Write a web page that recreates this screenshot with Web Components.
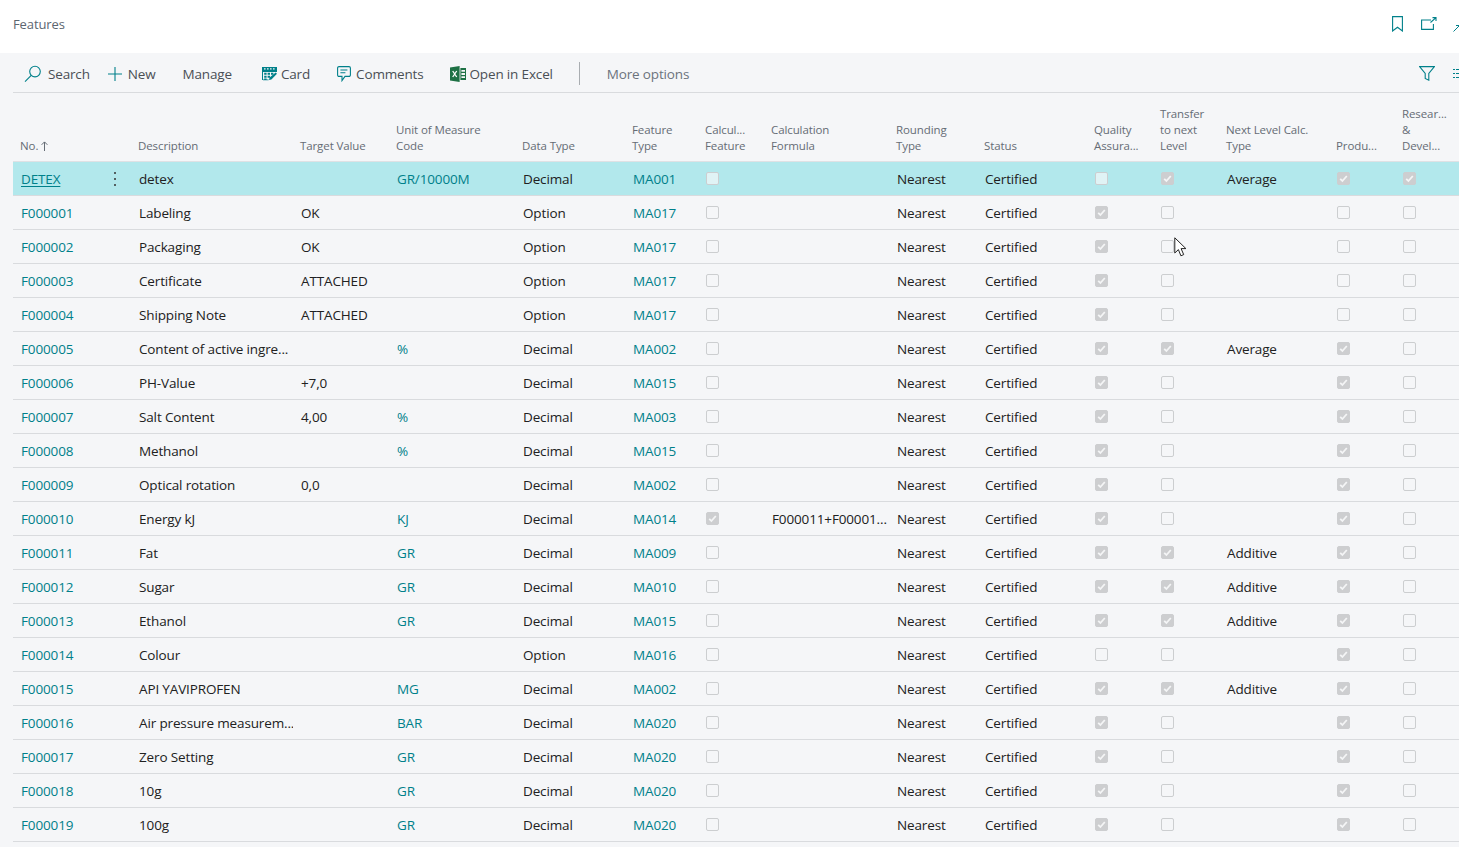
<!DOCTYPE html>
<html>
<head>
<meta charset="utf-8">
<title>Features</title>
<style>
  html, body { margin: 0; height: 100%; overflow: hidden; background: #f5f6f8; }
  body {
    font-family: "Open Sans", "Noto Sans", sans-serif;
    color: #212121;
    --cols: 118px 162px 96px 126px 110px 73px 66px 125px 88px 110px 66px 66px 110px 66px 64px;
    --teal: #00808a;
    position: relative;
  }
  #cursor { position: absolute; left: 1174px; top: 237px; }
</style>
</head>
<body>
<bc-title-bar>Features</bc-title-bar>
<bc-toolbar>
  <bc-action gap="6" style="margin-left:11px">
    <svg slot="icon" width="18" height="18" viewBox="0 0 18 18" fill="none" stroke="#00808a" stroke-width="1.1"><circle cx="11" cy="6.6" r="5.3"/><path d="M7.2 10.4 1 16.6"/></svg>Search
  </bc-action>
  <bc-action gap="6" style="margin-left:18px">
    <svg slot="icon" width="14" height="14" viewBox="0 0 14 14" fill="none" stroke="#00808a" stroke-width="1.1"><path d="M7 0v14M0 7h14"/></svg>New
  </bc-action>
  <bc-action gap="0" style="margin-left:27px">Manage</bc-action>
  <bc-action gap="4" style="margin-left:30px">
    <svg slot="icon" width="15" height="15" viewBox="0 0 15 15"><path fill="#00808a" d="M0 1h15v5H0z"/><path fill="#f5f6f8" d="M2 2.2h1.6v1.2H2zM5 2.2h1.6v1.2H5zM8 2.2h1.6v1.2H8zM11 2.2h1.6v1.2H11z"/><path fill="#00808a" d="M0 6h1v8H0zM2.2 6.8h2.4v2H2.2zM5.6 6.8H8v2H5.6zM9 6.8h2.4v2H9zM2.2 9.8h2.4v2H2.2zM5.6 9.8H8v2H5.6zM2.2 12.4h2.4v1.6H2.2zM1 13.4h5.6v.8H1z"/><path fill="#00808a" d="M13.6 6.4 15 7.8 9.4 13.4 7 14l.6-2.4z"/></svg>Card
  </bc-action>
  <bc-action gap="5" style="margin-left:27px">
    <svg slot="icon" width="14" height="16" viewBox="0 0 14 16" fill="none" stroke="#00808a" stroke-width="1.1"><path d="M2 .6h10A1.4 1.4 0 0 1 13.4 2v7A1.4 1.4 0 0 1 12 10.4H8L5 14.6v-4.2H2A1.4 1.4 0 0 1 .6 9V2A1.4 1.4 0 0 1 2 .6Z"/><path d="M3.4 4h7M3.4 6.8h5"/></svg>Comments
  </bc-action>
  <bc-action gap="4" style="margin-left:26px">
    <svg slot="icon" width="16" height="16" viewBox="0 0 16 16"><path fill="#1e7145" d="M0 1.6 9.6 0v16L0 14.4z"/><path fill="#1e7145" d="M10.4 2H16v12h-5.600z"/><path fill="#f5f6f8" d="M11.400 4h3.600v1.800h-3.600zM11.400 7.100h3.600v1.800h-3.600zM11.400 10.200h3.600v1.800h-3.600z"/><path fill="none" stroke="#fff" stroke-width="1.300" d="M2.700 5 6.700 11M6.700 5 2.700 11"/></svg>Open in Excel
  </bc-action>
  <bc-separator></bc-separator>
  <bc-action gap="0" muted style="margin-left:27px">More options</bc-action>
  <bc-tool-icons></bc-tool-icons>
</bc-toolbar>
<bc-grid></bc-grid>
<svg id="cursor" width="13" height="21" viewBox="0 0 13 21"><path fill="#fff" stroke="#222" stroke-width="1" stroke-linejoin="round" d="M.8.8v15.200l3.600-3.400 2.500 6.200 2.800-1.200-2.600-6h4.800z"/></svg>

<script>
class BcTitleBar extends HTMLElement {
  connectedCallback() {
    this.attachShadow({ mode: 'open' });
    this.shadowRoot.innerHTML = `
      <style>
        :host { display: flex; align-items: center; height: 53px; background: #fff; padding: 0 0 5px 13px; box-sizing: border-box; overflow: hidden; position: relative; }
        .name { font-size: 13px; color: #5c6670; letter-spacing: -0.1px; }
        .icons { position: absolute; left: 1392px; top: 16px; display: flex; align-items: flex-start; }
        svg { display: block; flex: none; }
      </style>
      <span class="name"><slot></slot></span>
      <div class="icons">
        <svg width="11" height="16" viewBox="0 0 11 16" fill="none" stroke="#00808a" stroke-width="1.1"><path d="M.6.6h9.800v14.400L5.500 11.200.6 15Z"/></svg>
        <svg style="margin:1px 0 0 18px" width="16" height="13" viewBox="0 0 16 13" fill="none" stroke="#00808a" stroke-width="1.1"><path d="M10 3H.6v9.400h11.800V7"/><path d="M9.500 5.500 15 .6M11.500.6H15v3.400"/></svg>
        <svg style="margin:7px 0 0 16px" width="8" height="9" viewBox="0 0 8 9" fill="none" stroke="#00808a" stroke-width="1"><path d="M.5 8.500 6.500 2.500M3 2.500h3.500V6"/></svg>
      </div>`;
  }
}

class BcToolbar extends HTMLElement {
  connectedCallback() {
    this.attachShadow({ mode: 'open' });
    this.shadowRoot.innerHTML = `
      <style>
        :host { display: flex; align-items: center; height: 40px; margin-left: 13px; padding-top: 2px; border-bottom: 1px solid #d9dbde; box-sizing: border-box; position: relative; }
      </style>
      <slot></slot>`;
  }
}

class BcAction extends HTMLElement {
  connectedCallback() {
    const gap = this.getAttribute('gap') || 0;
    const color = this.hasAttribute('muted') ? '#6b737c' : '#4a4f55';
    this.attachShadow({ mode: 'open' });
    this.shadowRoot.innerHTML = `
      <style>
        :host { display: inline-flex; align-items: center; gap: ${gap}px; font-size: 13.5px; letter-spacing: -0.16px; color: ${color}; white-space: nowrap; flex: none; }
        ::slotted(svg) { display: block; flex: none; }
      </style>
      <slot name="icon"></slot><span><slot></slot></span>`;
  }
}

class BcSeparator extends HTMLElement {
  connectedCallback() {
    this.attachShadow({ mode: 'open' });
    this.shadowRoot.innerHTML = `
      <style>
        :host { display: block; width: 1px; height: 23px; background: #a9adb1; margin-left: 26px; flex: none; }
      </style>`;
  }
}

class BcToolIcons extends HTMLElement {
  connectedCallback() {
    this.attachShadow({ mode: 'open' });
    this.shadowRoot.innerHTML = `
      <style>
        :host { position: absolute; left: 1406px; top: 13px; display: flex; align-items: center; }
        svg { display: block; flex: none; }
      </style>
      <svg width="16" height="15" viewBox="0 0 16 15" fill="none" stroke="#00808a" stroke-width="1.1"><path d="M.6.6h14.800L9.800 7.400v6.800L6.200 12.400V7.400Z"/></svg>
      <svg style="margin-left:18px" width="8" height="11" viewBox="0 0 8 11" fill="none" stroke="#00808a" stroke-width="1"><path d="M0 1.500h2M3 1.500h5M0 5.500h2M3 5.500h5M0 9.500h2M3 9.500h5"/></svg>`;
  }
}

class BcCheck extends HTMLElement {
  connectedCallback() {
    const on = this.hasAttribute('checked');
    const tint = this.hasAttribute('tint');
    this.attachShadow({ mode: 'open' });
    this.shadowRoot.innerHTML = `
      <style>
        :host { display: block; width: 13px; height: 13px; box-sizing: border-box; border-radius: 2px;
                border: 1px solid ${on ? '#cdced0' : '#ccced0'}; background: ${on ? '#cdced0' : tint ? '#e0f3f5' : '#f5f6f8'}; margin-left: 8px; }
        svg { display: block; }
      </style>
      ${on ? '<svg width="11" height="11" viewBox="0 0 11 11" fill="none" stroke="#f4f5f6" stroke-width="1.800"><path d="M2.200 5.800 4.400 8 8.800 3"/></svg>' : ''}`;
  }
}

class BcGrid extends HTMLElement {
  connectedCallback() {
    this.attachShadow({ mode: 'open' });
    this.shadowRoot.innerHTML = `
      <style>
        :host { display: block; margin-left: 13px; }
        .head { display: grid; grid-template-columns: var(--cols); align-items: end; height: 69px; box-sizing: border-box;
                border-bottom: 1px solid #dfe1e4; padding-bottom: 7px; }
        .head div { font-size: 11.5px; line-height: 16px; color: #656c75; padding-left: 7px; letter-spacing: -0.1px; white-space: nowrap; }
        .head svg { display: inline-block; margin-left: 3px; vertical-align: -1px; }
      </style>
      <div class="head">
        <div>No.<svg width="7" height="10" viewBox="0 0 7 10" fill="none" stroke="#656c75" stroke-width="1"><path d="M3.500 10V1M.6 3.800 3.500.9 6.400 3.800"/></svg></div><div>Description</div><div>Target Value</div><div>Unit of Measure<br>Code</div><div>Data Type</div>
        <div>Feature<br>Type</div><div>Calcul...<br>Feature</div><div>Calculation<br>Formula</div><div>Rounding<br>Type</div><div>Status</div>
        <div>Quality<br>Assura...</div><div>Transfer<br>to next<br>Level</div><div>Next Level Calc.<br>Type</div><div>Produ...</div><div>Resear...<br>&amp;<br>Devel...</div>
      </div>
      <div id="rows"></div>`;
    const rows = this.shadowRoot.getElementById('rows');
    FEATURES.forEach((data, i) => {
      const row = document.createElement('bc-row');
      row.data = data;
      if (i === 0) row.setAttribute('selected', '');
      rows.appendChild(row);
    });
  }
}

class BcRow extends HTMLElement {
  connectedCallback() {
    const [no, desc, target, uom, type, ma, formula, flags, next] = this.data;
    const sel = this.hasAttribute('selected');
    const box = c => `<bc-check ${flags[c] === '1' ? 'checked' : ''} ${sel ? 'tint' : ''}></bc-check>`;
    this.attachShadow({ mode: 'open' });
    this.shadowRoot.innerHTML = `
      <style>
        :host { display: grid; grid-template-columns: var(--cols); align-items: center; height: 34px; box-sizing: border-box;
                border-bottom: 1px solid #d9dbde; font-size: 13.5px; letter-spacing: -0.14px; color: #212121; white-space: nowrap;
                background: ${sel ? '#b2e8ec' : 'transparent'}; }
        div { padding-left: 8px; overflow: hidden; min-width: 0; }
        .link { color: var(--teal); }
        .no { display: flex; justify-content: space-between; align-items: center; padding-right: 15px; overflow: visible; }
        .no u { text-underline-offset: 2px; }
        .dots { width: 2px; display: grid; gap: 4px; }
        .dots i { display: block; width: 2px; height: 2px; background: #333; border-radius: 1px; }
      </style>
      <div class="no link">${sel ? `<u>${no}</u><span class="dots"><i></i><i></i><i></i></span>` : no}</div>
      <div>${desc}</div>
      <div>${target}</div>
      <div class="link">${uom}</div>
      <div>${type}</div>
      <div class="link">${ma}</div>
      ${box(0)}
      <div>${formula}</div>
      <div>Nearest</div>
      <div>Certified</div>
      ${box(1)}
      ${box(2)}
      <div>${next}</div>
      ${box(3)}
      ${box(4)}`;
  }
}

// flags: calculated, quality, transfer, production, research
const FEATURES = [
  ['DETEX', 'detex', '', 'GR/10000M', 'Decimal', 'MA001', '', '00111', 'Average'],
  ['F000001', 'Labeling', 'OK', '', 'Option', 'MA017', '', '01000', ''],
  ['F000002', 'Packaging', 'OK', '', 'Option', 'MA017', '', '01000', ''],
  ['F000003', 'Certificate', 'ATTACHED', '', 'Option', 'MA017', '', '01000', ''],
  ['F000004', 'Shipping Note', 'ATTACHED', '', 'Option', 'MA017', '', '01000', ''],
  ['F000005', 'Content of active ingre...', '', '%', 'Decimal', 'MA002', '', '01110', 'Average'],
  ['F000006', 'PH-Value', '+7,0', '', 'Decimal', 'MA015', '', '01010', ''],
  ['F000007', 'Salt Content', '4,00', '%', 'Decimal', 'MA003', '', '01010', ''],
  ['F000008', 'Methanol', '', '%', 'Decimal', 'MA015', '', '01010', ''],
  ['F000009', 'Optical rotation', '0,0', '', 'Decimal', 'MA002', '', '01010', ''],
  ['F000010', 'Energy kJ', '', 'KJ', 'Decimal', 'MA014', 'F000011+F00001...', '11010', ''],
  ['F000011', 'Fat', '', 'GR', 'Decimal', 'MA009', '', '01110', 'Additive'],
  ['F000012', 'Sugar', '', 'GR', 'Decimal', 'MA010', '', '01110', 'Additive'],
  ['F000013', 'Ethanol', '', 'GR', 'Decimal', 'MA015', '', '01110', 'Additive'],
  ['F000014', 'Colour', '', '', 'Option', 'MA016', '', '00010', ''],
  ['F000015', 'API YAVIPROFEN', '', 'MG', 'Decimal', 'MA002', '', '01110', 'Additive'],
  ['F000016', 'Air pressure measurem...', '', 'BAR', 'Decimal', 'MA020', '', '01010', ''],
  ['F000017', 'Zero Setting', '', 'GR', 'Decimal', 'MA020', '', '01010', ''],
  ['F000018', '10g', '', 'GR', 'Decimal', 'MA020', '', '01010', ''],
  ['F000019', '100g', '', 'GR', 'Decimal', 'MA020', '', '01010', '']
];

customElements.define('bc-title-bar', BcTitleBar);
customElements.define('bc-toolbar', BcToolbar);
customElements.define('bc-action', BcAction);
customElements.define('bc-separator', BcSeparator);
customElements.define('bc-tool-icons', BcToolIcons);
customElements.define('bc-check', BcCheck);
customElements.define('bc-row', BcRow);
customElements.define('bc-grid', BcGrid);
</script>
</body>
</html>
